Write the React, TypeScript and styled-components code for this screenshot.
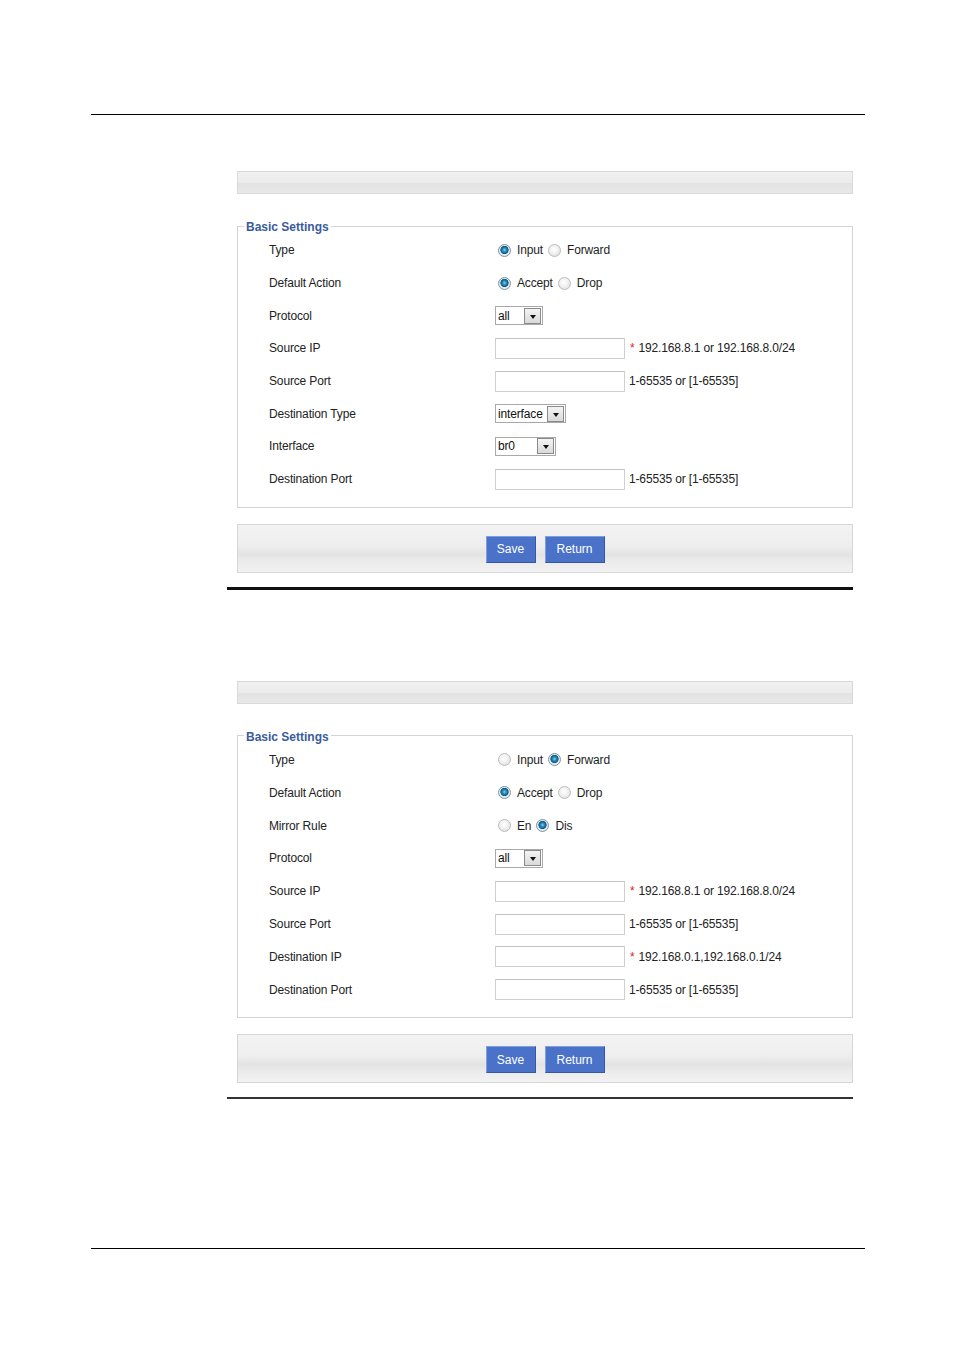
import React from "react";
import styled, { createGlobalStyle } from "styled-components";

type Control =
  | { kind: "radio"; options: string[]; selected: number }
  | { kind: "select"; value: string; width: number }
  | { kind: "input"; hint?: string; required?: boolean };

interface FieldRow {
  label: string;
  control: Control;
}

const GlobalStyle = createGlobalStyle`
  body {
    margin: 0;
    background: #fff;
    font-family: "Liberation Sans", Arial, sans-serif;
    color: #1e1e1e;
  }
`;

const Page = styled.div`
  width: 955px;
  height: 1350px;
  padding-top: 114px;
  box-sizing: border-box;
`;

const PageRule = styled.div<{ $top?: number }>`
  margin-left: 91px;
  margin-top: ${(p) => p.$top ?? 0}px;
  width: 774px;
  height: 1px;
  background: #000;
`;

const Content = styled.div`
  margin-left: 227px;
  width: 627px;
`;

const Panels = styled.div<{ $top: number }>`
  margin-top: ${(p) => p.$top}px;
  margin-left: 10px;
  width: 616px;
`;

const HeaderBar = styled.div`
  height: 23px;
  box-sizing: border-box;
  border: 1px solid #d9d9d9;
  background: linear-gradient(#f0f0f0 0%, #ececec 50%, #e3e3e3 51%, #e8e8e8 100%);
`;

const Fieldset = styled.fieldset`
  margin: 23px 0 0;
  padding: 0 0 11px 31px;
  border: 1px solid #d4d4d4;
  min-width: 0;
`;

const Legend = styled.legend`
  margin-left: -25px;
  padding: 3px 2px 0;
  font-size: 12px;
  line-height: 15px;
  font-weight: bold;
  color: #3a5b9c;
`;

const Rows = styled.div<{ $shift: number }>`
  margin-top: ${(p) => p.$shift}px;
`;

const Row = styled.div<{ $h: number }>`
  display: grid;
  grid-template-columns: 226px 1fr;
  align-items: center;
  height: ${(p) => p.$h}px;
  font-size: 12px;
  letter-spacing: -0.15px;
`;

const Label = styled.div`
  color: #222;
`;

const ControlCell = styled.div`
  display: flex;
  align-items: center;
`;

const RadioDot = styled.span<{ $on?: boolean }>`
  display: inline-block;
  width: 13px;
  height: 13px;
  box-sizing: border-box;
  border-radius: 50%;
  border: 1px solid ${(p) => (p.$on ? "#7d93a6" : "#bcbcbc")};
  background: ${(p) =>
    p.$on
      ? "radial-gradient(circle at 50% 45%, #7fd8ee 0, #2a8fbc 1.8px, #0f5680 3.8px, #dfe7ec 4.4px, #f6f6f6 100%)"
      : "radial-gradient(circle at 45% 40%, #ffffff 0, #f1f1f1 45%, #d6d6d6 100%)"};
  margin: 0 6px 0 3px;
  flex: none;
`;

const RadioText = styled.span`
  margin-right: 2px;
`;

const SelectBox = styled.div<{ $w: number }>`
  width: ${(p) => p.$w}px;
  height: 19px;
  box-sizing: border-box;
  border: 1px solid #a9a9a9;
  background: #fff;
  display: flex;
  align-items: center;
  justify-content: space-between;
  padding: 0 1px 0 2px;
`;

const SelectValue = styled.span`
  font-size: 12px;
  color: #111;
`;

const SelectArrow = styled.span`
  width: 17px;
  height: 16px;
  box-sizing: border-box;
  border: 1px solid #8a8a8a;
  background: linear-gradient(#f4f4f4, #d9d9d9);
  display: flex;
  align-items: center;
  justify-content: center;

  &::after {
    content: "";
    border-left: 3.5px solid transparent;
    border-right: 3.5px solid transparent;
    border-top: 4px solid #111;
    margin-top: 2px;
  }
`;

const TextInput = styled.div`
  width: 130px;
  height: 21px;
  box-sizing: border-box;
  border: 1px solid #cfcfcf;
  border-top-color: #c2c2c2;
  background: #fff;
`;

const Hint = styled.span`
  margin-left: 4px;
  color: #222;
`;

const Star = styled.span`
  color: #e02020;
  margin: 0 4px 0 1px;
  font-size: 12px;
`;

const ButtonBar = styled.div`
  margin-top: 16px;
  height: 49px;
  box-sizing: border-box;
  border: 1px solid #d6d6d6;
  background: linear-gradient(#f3f3f3 0%, #eeeeee 45%, #e3e3e3 62%, #ececec 80%, #f2f2f2 100%);
  display: flex;
  justify-content: center;
  align-items: center;
  gap: 9px;
  padding-top: 2px;
`;

const Button = styled.button<{ $w: number }>`
  width: ${(p) => p.$w}px;
  height: 27px;
  border: none;
  border-top: 1px solid #7d9ee0;
  border-left: 1px solid #7d9ee0;
  border-bottom: 1px solid #3458a6;
  border-right: 1px solid #3458a6;
  background: #4a72c9;
  color: #fff;
  font-family: "Liberation Sans", Arial, sans-serif;
  font-size: 12px;
  padding: 0;
`;

const SectionLine = styled.div<{ $h: number; $color: string }>`
  margin-top: 14px;
  width: 626px;
  height: ${(p) => p.$h}px;
  background: ${(p) => p.$color};
`;

const portHint = "1-65535 or [1-65535]";

const firstForm: FieldRow[] = [
  { label: "Type", control: { kind: "radio", options: ["Input", "Forward"], selected: 0 } },
  { label: "Default Action", control: { kind: "radio", options: ["Accept", "Drop"], selected: 0 } },
  { label: "Protocol", control: { kind: "select", value: "all", width: 48 } },
  { label: "Source IP", control: { kind: "input", required: true, hint: "192.168.8.1 or 192.168.8.0/24" } },
  { label: "Source Port", control: { kind: "input", hint: portHint } },
  { label: "Destination Type", control: { kind: "select", value: "interface", width: 71 } },
  { label: "Interface", control: { kind: "select", value: "br0", width: 61 } },
  { label: "Destination Port", control: { kind: "input", hint: portHint } },
];

const secondForm: FieldRow[] = [
  { label: "Type", control: { kind: "radio", options: ["Input", "Forward"], selected: 1 } },
  { label: "Default Action", control: { kind: "radio", options: ["Accept", "Drop"], selected: 0 } },
  { label: "Mirror Rule", control: { kind: "radio", options: ["En", "Dis"], selected: 1 } },
  { label: "Protocol", control: { kind: "select", value: "all", width: 48 } },
  { label: "Source IP", control: { kind: "input", required: true, hint: "192.168.8.1 or 192.168.8.0/24" } },
  { label: "Source Port", control: { kind: "input", hint: portHint } },
  { label: "Destination IP", control: { kind: "input", required: true, hint: "192.168.0.1,192.168.0.1/24" } },
  { label: "Destination Port", control: { kind: "input", hint: portHint } },
];

const renderControl = (c: Control) => {
  if (c.kind === "radio") {
    return c.options.map((opt, i) => (
      <React.Fragment key={opt}>
        <RadioDot $on={i === c.selected} />
        <RadioText>{opt}</RadioText>
      </React.Fragment>
    ));
  }
  if (c.kind === "select") {
    return (
      <SelectBox $w={c.width}>
        <SelectValue>{c.value}</SelectValue>
        <SelectArrow />
      </SelectBox>
    );
  }
  return (
    <>
      <TextInput />
      {c.hint &&
        (c.required ? (
          <Hint>
            <Star>*</Star>
            {c.hint}
          </Hint>
        ) : (
          <Hint>{c.hint}</Hint>
        ))}
    </>
  );
};

const FormPanel: React.FC<{ rows: FieldRow[]; rowHeight: number; shift: number; top: number }> = ({
  rows,
  rowHeight,
  shift,
  top,
}) => (
  <Panels $top={top}>
    <HeaderBar />
    <Fieldset>
      <Legend>Basic Settings</Legend>
      <Rows $shift={shift}>
        {rows.map((r) => (
          <Row key={r.label} $h={rowHeight}>
            <Label>{r.label}</Label>
            <ControlCell>{renderControl(r.control)}</ControlCell>
          </Row>
        ))}
      </Rows>
    </Fieldset>
    <ButtonBar>
      <Button $w={50}>Save</Button>
      <Button $w={60}>Return</Button>
    </ButtonBar>
  </Panels>
);

const App: React.FC = () => (
  <>
    <GlobalStyle />
    <Page>
      <PageRule />
      <Content>
        <FormPanel rows={firstForm} rowHeight={32.7} shift={-1} top={56} />
        <SectionLine $h={3} $color="#111" />
        <FormPanel rows={secondForm} rowHeight={32.85} shift={-1} top={91} />
        <SectionLine $h={2} $color="#333" />
      </Content>
      <PageRule $top={149} />
    </Page>
  </>
);

export default App;
